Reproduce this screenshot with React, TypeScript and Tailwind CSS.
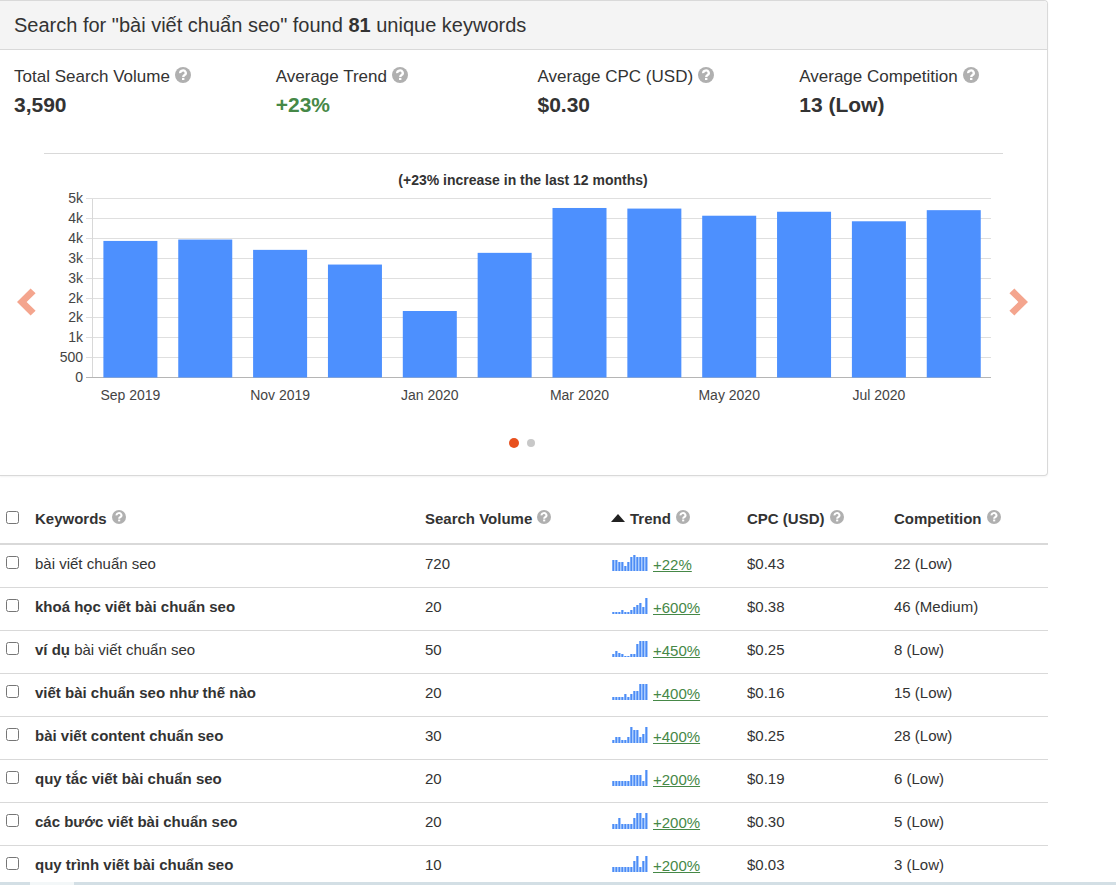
import { useState } from "react";
import { clsx } from "clsx";

const STATS = [
  { label: "Total Search Volume", value: "3,590" },
  { label: "Average Trend", value: "+23%", up: true },
  { label: "Average CPC (USD)", value: "$0.30" },
  { label: "Average Competition", value: "13 (Low)" },
];

const MONTHS = [
  { label: "Sep 2019", volume: 3440 },
  { label: "Oct 2019", volume: 3475 },
  { label: "Nov 2019", volume: 3215 },
  { label: "Dec 2019", volume: 2845 },
  { label: "Jan 2020", volume: 1675 },
  { label: "Feb 2020", volume: 3140 },
  { label: "Mar 2020", volume: 4270 },
  { label: "Apr 2020", volume: 4255 },
  { label: "May 2020", volume: 4075 },
  { label: "Jun 2020", volume: 4175 },
  { label: "Jul 2020", volume: 3935 },
  { label: "Aug 2020", volume: 4215 },
];

const Y_LABELS = ["0", "500", "1k", "2k", "2k", "3k", "3k", "4k", "4k", "5k"];

interface Keyword {
  bold?: string;
  plain?: string;
  volume: string;
  spark: number[];
  trend: string;
  cpc: string;
  competition: string;
}

const KEYWORDS: Keyword[] = [
  { plain: "bài viết chuẩn seo", volume: "720", spark: [11, 11, 9, 9, 5, 9, 14, 16, 14, 14, 14, 14], trend: "+22%", cpc: "$0.43", competition: "22 (Low)" },
  { bold: "khoá học viết bài chuẩn seo", volume: "20", spark: [2, 2, 2, 4, 2, 2, 4, 7, 9, 11, 7, 16], trend: "+600%", cpc: "$0.38", competition: "46 (Medium)" },
  { bold: "ví dụ", plain: " bài viết chuẩn seo", volume: "50", spark: [3, 6, 4, 3, 1, 1, 3, 3, 13, 16, 16, 16], trend: "+450%", cpc: "$0.25", competition: "8 (Low)" },
  { bold: "viết bài chuẩn seo như thế nào", volume: "20", spark: [3, 3, 3, 3, 6, 3, 6, 9, 9, 16, 16, 16], trend: "+400%", cpc: "$0.16", competition: "15 (Low)" },
  { bold: "bài viết content chuẩn seo", volume: "30", spark: [3, 6, 6, 3, 3, 6, 16, 13, 13, 6, 9, 16], trend: "+400%", cpc: "$0.25", competition: "28 (Low)" },
  { bold: "quy tắc viết bài chuẩn seo", volume: "20", spark: [5, 5, 5, 5, 5, 5, 11, 11, 11, 11, 5, 16], trend: "+200%", cpc: "$0.19", competition: "6 (Low)" },
  { bold: "các bước viết bài chuẩn seo", volume: "20", spark: [5, 5, 11, 5, 5, 5, 5, 11, 16, 16, 11, 16], trend: "+200%", cpc: "$0.30", competition: "5 (Low)" },
  { bold: "quy trình viết bài chuẩn seo", volume: "10", spark: [5, 5, 5, 5, 5, 5, 5, 11, 16, 5, 11, 16], trend: "+200%", cpc: "$0.03", competition: "3 (Low)" },
];

const COLUMNS = ["Keywords", "Search Volume", "Trend", "CPC (USD)", "Competition"];

function HelpIcon({ className }: { className: string }) {
  return (
    <svg viewBox="0 0 16 16" className={clsx("inline-block shrink-0", className)} aria-hidden="true">
      <circle cx="8" cy="8" r="8" fill="#b0b0b0" />
      <path d="M5.2 6.2a2.8 2.5 0 1 1 4.3 1.9c-.9.6-1.3.8-1.3 1.8" fill="none" stroke="#fff" strokeWidth="2.3" />
      <rect x="7" y="10.9" width="2.4" height="2.1" fill="#fff" />
    </svg>
  );
}

function ArrowIcon({ flip }: { flip?: boolean }) {
  return (
    <svg viewBox="0 0 20 28" className={clsx("w-5 h-7", flip && "-scale-x-100")} aria-hidden="true">
      <path d="M14.6 0.6 L19.6 5.2 L10.6 14 L19.6 22.8 L14.6 27.4 L1 14 Z" fill="#f4a58e" />
    </svg>
  );
}

function VolumeChart() {
  const base = 223.5;
  const step = 19.85;
  return (
    <svg viewBox="0 0 959 260" className="w-full" role="img" aria-label="Monthly search volume">
      <text x="479" y="31" textAnchor="middle" fontSize="14" fontWeight="700" fill="#333">
        (+23% increase in the last 12 months)
      </text>
      {Y_LABELS.map((label, i) => {
        const y = Math.floor(base - i * step) + 0.5;
        return (
          <g key={i}>
            <line x1="42" x2="947" y1={y} y2={y} stroke={i === 0 ? "#b5b5b5" : "#dfdfdf"} />
            <text x="39" y={y + 4} textAnchor="end" fontSize="14" fill="#444">
              {label}
            </text>
          </g>
        );
      })}
      <line x1="48.5" x2="48.5" y1="45" y2="223" stroke="#d8d8d8" />
      {MONTHS.map((month, i) => {
        const x = 59.4 + i * 74.85;
        const height = (month.volume / 500) * step;
        return (
          <g key={month.label}>
            <rect x={x} y={base - height} width="54" height={height} fill="#4d90fe" />
            {i % 2 === 0 && (
              <text x={x + 27} y="246" textAnchor="middle" fontSize="14" fill="#444">
                {month.label}
              </text>
            )}
          </g>
        );
      })}
    </svg>
  );
}

function Sparkline({ values }: { values: number[] }) {
  return (
    <svg viewBox="0 0 36 16" className="w-9 h-4 shrink-0" aria-hidden="true">
      {values.map((v, i) => (
        <g key={i}>
          <rect x={i * 3} y={16 - v} width="3" height={v} fill="#a9cbfd" />
          <rect x={i * 3 + 0.5} y={16 - v} width="1.5" height={v} fill="#4d8cf5" />
        </g>
      ))}
    </svg>
  );
}

function SummaryCard() {
  const [slide, setSlide] = useState(0);
  const toggle = () => setSlide(slide === 0 ? 1 : 0);

  return (
    <section className="border-y border-r border-[#d9d9d9] rounded-r shadow-xs">
      <h1 className="h-[49px] px-3.5 flex items-center bg-[#f4f4f4] border-b border-[#d9d9d9] rounded-tr text-xl">
        <span>
          Search for "bài viết chuẩn seo" found <b>81</b> unique keywords
        </span>
      </h1>

      <dl className="grid grid-cols-4 pt-4 pb-8">
        {STATS.map((stat) => (
          <div key={stat.label} className="pl-3.5">
            <dt className="flex items-start gap-[5px] h-[23px] text-[17px] leading-[22px]">
              {stat.label}
              <HelpIcon className="w-4 h-4 mt-px" />
            </dt>
            <dd className={clsx("text-[21px] leading-8 font-bold", stat.up && "text-[#468847]")}>{stat.value}</dd>
          </div>
        ))}
      </dl>

      {/* Chart slider */}
      <div className="flex items-center">
        <button type="button" aria-label="Previous chart" onClick={toggle} className="w-11 pl-4 pt-9 shrink-0">
          <ArrowIcon />
        </button>
        <div className="flex-1 border-t border-[#d9d9d9]">
          <VolumeChart />
        </div>
        <button type="button" aria-label="Next chart" onClick={toggle} className="w-11 pl-1.5 pt-9 shrink-0">
          <ArrowIcon flip />
        </button>
      </div>

      <div className="flex items-center justify-center gap-2 pt-6 pb-[27px] pr-1">
        {[0, 1].map((i) => (
          <button
            key={i}
            type="button"
            aria-label={`Show chart ${i + 1}`}
            onClick={() => setSlide(i)}
            className={clsx("rounded-full", slide === i ? "size-2.5 bg-[#e8501e]" : "size-2 bg-[#c8c8c8]")}
          />
        ))}
      </div>
    </section>
  );
}

function KeywordTable() {
  return (
    <table className="w-full mt-[18px] table-fixed text-[15px] leading-5 text-left">
      <colgroup>
        <col className="w-8" />
        <col />
        <col className="w-[186px]" />
        <col className="w-[136px]" />
        <col className="w-[147px]" />
        <col className="w-[157px]" />
      </colgroup>
      <thead>
        <tr className="h-[50px] border-b-2 border-[#d9d9d9]">
          <th className="pl-1.5 align-top pt-[17px]">
            <input type="checkbox" aria-label="Select all keywords" className="block size-[13px]" />
          </th>
          {COLUMNS.map((column) => (
            <th key={column} className="pl-[3px] align-top pt-[15px]">
              <span className="flex items-start gap-[5px]">
                {column === "Trend" && (
                  <svg viewBox="0 0 14 8" className="w-3.5 h-2 mt-[5px] shrink-0" aria-hidden="true">
                    <path d="M7 0 L14 8 H0 Z" fill="#222" />
                  </svg>
                )}
                {column}
                <HelpIcon className="size-3.5 mt-px" />
              </span>
            </th>
          ))}
        </tr>
      </thead>
      <tbody>
        {KEYWORDS.map((kw, i) => (
          <tr key={i} className="h-[43px] border-b border-[#d9d9d9]">
            <td className="pl-1.5 align-top pt-[11px]">
              <input type="checkbox" aria-label={`Select ${kw.bold ?? ""}${kw.plain ?? ""}`} className="block size-[13px]" />
            </td>
            <td className="pl-[3px] align-top pt-[9px]">
              {kw.bold && <b>{kw.bold}</b>}
              {kw.plain}
            </td>
            <td className="pl-[3px] align-top pt-[9px]">{kw.volume}</td>
            <td className="pl-[3px] align-top pt-2.5">
              <span className="flex items-start gap-[5px] pl-px">
                <Sparkline values={kw.spark} />
                <a href="#trend" className="text-[#468847] underline">
                  {kw.trend}
                </a>
              </span>
            </td>
            <td className="pl-[3px] align-top pt-[9px]">{kw.cpc}</td>
            <td className="pl-[3px] align-top pt-[9px]">{kw.competition}</td>
          </tr>
        ))}
      </tbody>
    </table>
  );
}

export default function App() {
  return (
    <div className="h-screen flex flex-col bg-white text-[#333] font-['Liberation_Sans',Arial,sans-serif]">
      <main className="flex-1 min-h-0 overflow-hidden pr-[68px]">
        <SummaryCard />
        <KeywordTable />
      </main>
      <footer className="h-[3px] shrink-0 flex bg-[#d3dfe5]">
        <div className="ml-[30px] w-11 bg-[#f3f7f8]" />
      </footer>
    </div>
  );
}
